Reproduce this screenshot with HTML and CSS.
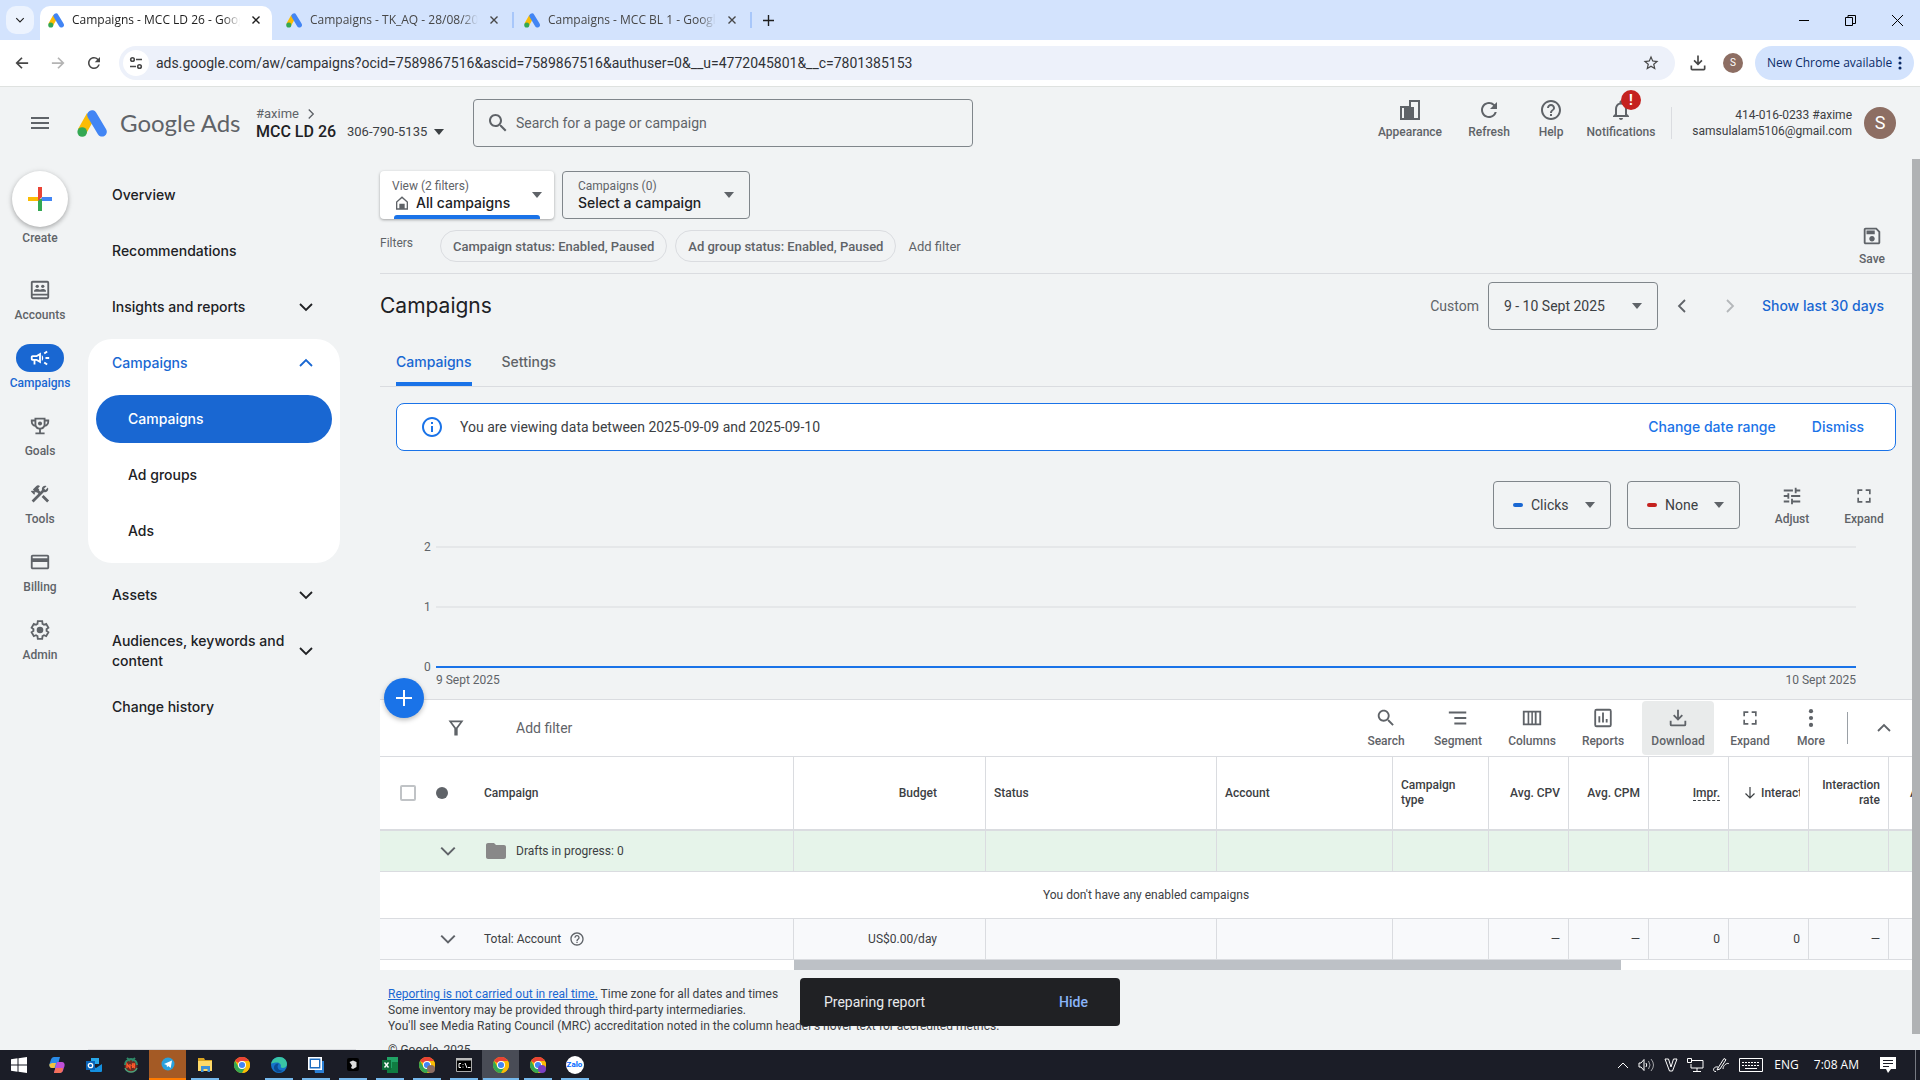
FILE: index.html
```html
<!DOCTYPE html>
<html lang="en">
<head>
<meta charset="utf-8">
<title>Campaigns - MCC LD 26 - Google Ads</title>
<link rel="stylesheet" href="styles.css">
</head>
<body>
<svg class="defs" aria-hidden="true">
  <symbol id="i-ads" viewBox="0 0 30 27"><path d="M14 5.500 5 21.500" stroke="#fbbc04" stroke-width="9.400"/><circle cx="5.200" cy="22" r="4.800" fill="#34a853"/><path d="M15 5 25 21.800" stroke="#4285f4" stroke-width="9.600" stroke-linecap="round"/></symbol>
  <symbol id="i-close" viewBox="0 0 16 16"><path d="m4 4 8 8M12 4l-8 8" fill="none" stroke="currentColor" stroke-width="1.600"/></symbol>
  <symbol id="i-search" viewBox="0 0 24 24"><path d="M15.500 14h-.79l-.28-.27C15.410 12.590 16 11.110 16 9.500 16 5.910 13.090 3 9.500 3S3 5.910 3 9.500 5.910 16 9.500 16c1.610 0 3.090-.59 4.230-1.570l.27.28v.79l5 4.990L20.490 19l-4.990-5zm-6 0C7.010 14 5 11.990 5 9.500S7.010 5 9.500 5 14 7.010 14 9.500 11.990 14 9.500 14z"/></symbol>
  <symbol id="i-menu" viewBox="0 0 24 24"><path d="M3 18h18v-2H3v2zm0-5h18v-2H3v2zm0-7v2h18V6H3z"/></symbol>
  <symbol id="i-refresh" viewBox="0 0 24 24"><path d="M17.650 6.350A7.958 7.958 0 0 0 12 4c-4.420 0-7.990 3.580-7.990 8s3.570 8 7.990 8c3.730 0 6.840-2.550 7.730-6h-2.080A5.990 5.990 0 0 1 12 18c-3.310 0-6-2.690-6-6s2.690-6 6-6c1.660 0 3.140.69 4.220 1.780L13 11h7V4l-2.350 2.350z"/></symbol>
  <symbol id="i-help" viewBox="0 0 24 24"><path d="M11 18h2v-2h-2v2zm1-16C6.480 2 2 6.480 2 12s4.480 10 10 10 10-4.480 10-10S17.520 2 12 2zm0 18c-4.410 0-8-3.590-8-8s3.590-8 8-8 8 3.590 8 8-3.590 8-8 8zm0-14c-2.210 0-4 1.790-4 4h2c0-1.100.9-2 2-2s2 .9 2 2c0 2-3 1.750-3 5h2c0-2.250 3-2.500 3-5 0-2.210-1.790-4-4-4z"/></symbol>
  <symbol id="i-bell" viewBox="0 0 24 24"><path d="M12 22c1.100 0 2-.9 2-2h-4c0 1.100.9 2 2 2zm6-6v-5c0-3.070-1.630-5.640-4.500-6.320V4c0-.83-.67-1.500-1.500-1.500s-1.500.67-1.500 1.500v.68C7.640 5.360 6 7.920 6 11v5l-2 2v1h16v-1l-2-2zm-2 1H8v-6c0-2.480 1.510-4.500 4-4.500s4 2.020 4 4.500v6z"/></symbol>
  <symbol id="i-appearance" viewBox="0 0 24 24"><path d="M2 8h9V2h11v20H2zm2 2v10h2V10zm9-6v5h3v11h4V4z" fill-rule="evenodd"/></symbol>
  <symbol id="i-info" viewBox="0 0 24 24"><path d="M11 7h2v2h-2zm0 4h2v6h-2zm1-9C6.480 2 2 6.480 2 12s4.480 10 10 10 10-4.480 10-10S17.520 2 12 2zm0 18c-4.410 0-8-3.590-8-8s3.590-8 8-8 8 3.590 8 8-3.590 8-8 8z"/></symbol>
  <symbol id="i-full" viewBox="0 0 24 24"><path d="M6 14H4v6h6v-2H6v-4zm-2-4h2V6h4V4H4v6zm14 8h-4v2h6v-6h-2v4zM14 4v2h4v4h2V4h-6z"/></symbol>
  <symbol id="i-tune" viewBox="0 0 24 24"><path d="M3 17v2h6v-2H3zM3 5v2h10V5H3zm10 16v-2h8v-2h-8v-2h-2v6h2zM7 9v2H3v2h4v2h2V9H7zm14 4v-2H11v2h10zm-6-4h2V7h4V5h-4V3h-2v6z"/></symbol>
  <symbol id="i-more" viewBox="0 0 24 24"><circle cx="12" cy="4.500" r="2.300"/><circle cx="12" cy="12" r="2.300"/><circle cx="12" cy="19.500" r="2.300"/></symbol>
  <symbol id="i-mega" viewBox="0 0 24 24"><path d="M18 11v2h4v-2h-4zm-2 6.610c.96.71 2.210 1.650 3.200 2.390.4-.53.8-1.070 1.200-1.600-.99-.74-2.240-1.680-3.200-2.400-.4.54-.8 1.080-1.200 1.610zM20.400 5.600c-.4-.53-.8-1.070-1.200-1.600-.99.74-2.240 1.680-3.200 2.400.4.530.8 1.070 1.200 1.600.96-.72 2.210-1.650 3.200-2.400zM4 9c-1.100 0-2 .9-2 2v2c0 1.100.9 2 2 2h1v4h2v-4h1l5 3V6L8 9H4zm7 .5v5L8.500 13H4v-2h4.500zM15.500 12c0-1.330-.58-2.530-1.500-3.350v6.690c.92-.81 1.500-2.010 1.500-3.340z"/></symbol>
  <symbol id="i-card" viewBox="0 0 24 24"><path d="M20 4H4c-1.110 0-1.990.89-1.990 2L2 18c0 1.110.89 2 2 2h16c1.110 0 2-.89 2-2V6c0-1.110-.89-2-2-2zm0 14H4v-6h16v6zm0-10H4V6h16v2z"/></symbol>
  <symbol id="i-gear" viewBox="0 0 24 24"><path fill="none" stroke="currentColor" stroke-width="2" d="M19.140 12.940c.04-.3.06-.61.06-.94 0-.32-.02-.64-.07-.94l2.030-1.580-2.390-4.150-2.390.96c-.5-.38-1.030-.7-1.620-.94L14.400 2.400H9.600l-.36 2.950c-.59.24-1.130.57-1.620.94l-2.390-.96-2.370 4.150 2.030 1.580c-.05.3-.09.63-.09.94s.02.64.07.94l-2.030 1.580 2.390 4.150 2.390-.96c.5.38 1.030.7 1.620.94l.36 2.950h4.800l.36-2.950c.59-.24 1.130-.56 1.620-.94l2.390.96 2.390-4.150z"/><circle cx="12" cy="12" r="3.600"/></symbol>
  <symbol id="i-tools" viewBox="0 0 24 24"><path d="m13.783 15.172 2.121-2.121 5.996 5.996-2.121 2.121zM17.500 10c1.930 0 3.500-1.570 3.500-3.500 0-.58-.16-1.120-.41-1.600l-2.700 2.700-1.490-1.490 2.700-2.700c-.48-.25-1.020-.41-1.600-.41C15.570 3 14 4.570 14 6.500c0 .41.08.8.21 1.160l-1.850 1.850-1.780-1.780.71-.71-1.410-1.410L12 3.490a3 3 0 0 0-4.240 0L4.220 7.030l1.410 1.410H2.810l-.71.71 3.540 3.540.71-.71V9.150l1.410 1.410.71-.71 1.780 1.780-7.410 7.410 2.120 2.120L16.340 9.790c.36.13.75.21 1.160.21z"/></symbol>
  <symbol id="i-trophy" viewBox="0 0 24 24"><path d="M22 5h-4V3H6v2H2v2c0 3.200 1.900 5.300 4.600 5.800.8 1.700 2.300 2.800 4.400 3.100V19H7v2h10v-2h-4v-3.100c2.100-.3 3.600-1.400 4.400-3.100C20.100 12.300 22 10.200 22 7zM4 7h2v3.600C4.800 10 4 8.800 4 7zm8 7c-2.200 0-4-1.500-4-3.600V5h8v5.400c0 2.100-1.800 3.600-4 3.600zm6-3.400V7h2c0 1.800-.8 3-2 3.600z"/><circle cx="12" cy="9.300" r="2.200"/></symbol>
  <symbol id="i-accounts" viewBox="0 0 24 24"><path d="M4 2h16a2 2 0 0 1 2 2v16a2 2 0 0 1-2 2H4a2 2 0 0 1-2-2V4c0-1.100.9-2 2-2zm0 2v12h16V4zm0 14v2h16v-2z" fill-rule="evenodd"/><circle cx="9" cy="8" r="1.800"/><circle cx="15" cy="8" r="1.800"/><path d="M5.500 14v-1c0-1.500 2-2.200 3.500-2.200 1.100 0 2.200.3 3 1 .8-.7 1.900-1 3-1 1.500 0 3.500.7 3.500 2.200v1z"/></symbol>
  <symbol id="i-save" viewBox="0 0 24 24"><path d="M17 3H5c-1.110 0-2 .9-2 2v14c0 1.100.89 2 2 2h14c1.100 0 2-.9 2-2V7l-4-4zm2 16H5V5h11.170L19 7.830V19zm-7-7c-1.660 0-3 1.340-3 3s1.340 3 3 3 3-1.340 3-3-1.340-3-3-3zM6 6h9v4H6z"/></symbol>
  <symbol id="i-reports" viewBox="0 0 24 24"><path d="M19 2H5a2.500 2.500 0 0 0-2.500 2.500v15A2.500 2.500 0 0 0 5 22h14a2.500 2.500 0 0 0 2.500-2.500v-15A2.500 2.500 0 0 0 19 2zm.5 18h-15V4h15v16zM7 10h2v7H7zm4-4h2v11h-2zm4 7h2v4h-2z"/></symbol>
  <symbol id="i-columns" viewBox="0 0 24 24"><path d="M2 4h20v16H2zm2 2v12h3.200V6zm5 0v12h2.300V6zm4 0v12h2V6zm4 0v12h3V6z" fill-rule="evenodd"/></symbol>
  <symbol id="i-down" viewBox="0 0 24 24"><path d="M11 3h2v8.200l3-3 1.400 1.400L12 15 6.600 9.600 8 8.200l3 3zM3 15h2v4h14v-4h2v4a2 2 0 0 1-2 2H5a2 2 0 0 1-2-2z"/></symbol>
  <symbol id="i-funnel" viewBox="0 0 24 24"><path d="M3 3h18l-7 9.500V21h-4v-8.500zm4 2 5 6.800L17 5z" fill-rule="evenodd"/></symbol>
  <symbol id="i-segment" viewBox="0 0 24 24"><path d="M8 19h13v-2H8zM2 5v2h19V5zm6 8h13v-2H8z"/></symbol>
  <symbol id="i-folder" viewBox="0 0 24 24"><path d="M10 4H4c-1.100 0-1.990.9-1.990 2L2 18c0 1.100.9 2 2 2h16c1.100 0 2-.9 2-2V8c0-1.100-.9-2-2-2h-8l-2-2z"/></symbol>
  <symbol id="i-star" viewBox="0 0 24 24"><path d="m22 9.240-7.190-.62L12 2 9.190 8.630 2 9.240l5.460 4.730L5.820 21 12 17.270 18.180 21l-1.630-7.030L22 9.240zM12 15.400l-3.760 2.270 1-4.280-3.320-2.880 4.380-.38L12 6.100l1.710 4.040 4.380.38-3.320 2.880 1 4.280L12 15.400z"/></symbol>
  <symbol id="i-home" viewBox="0 0 24 24"><path d="M12 2 3 10v12h18V10zm0 2.800 7 6.200v9h-3v-7H8v7H5v-9z" fill-rule="evenodd"/><path d="M10 14h4v7h-4z"/></symbol>
  <symbol id="i-chev" viewBox="0 0 16 16"><path d="m2 5 6 6 6-6" fill="none" stroke="currentColor" stroke-width="1.800"/></symbol>
  <symbol id="i-caret" viewBox="0 0 10 6"><path d="M0 0h10L5 6z"/></symbol>
  <symbol id="i-plus" viewBox="0 0 16 16"><path d="M8 0v16M0 8h16" stroke="currentColor" stroke-width="2"/></symbol>
  <symbol id="i-back" viewBox="0 0 16 16"><path d="M15 8H2M8 2 2 8l6 6" fill="none" stroke="currentColor" stroke-width="2"/></symbol>
  <symbol id="i-chrome" viewBox="0 0 24 24"><circle cx="12" cy="12" r="12" fill="#fbbc04"/><path d="M12 12 1.600 6A12 12 0 0 1 22.400 6z" fill="#ea4335"/><path d="M12 6h10.400A12 12 0 0 1 12 24l5.200-9z" fill="#fbbc04"/><path d="M1.600 6 6.800 15 12 18l0 6A12 12 0 0 1 1.600 6z" fill="#34a853"/><path d="m12 24 5.200-9L12 18z" fill="#34a853"/><circle cx="12" cy="12" r="6" fill="#fff"/><circle cx="12" cy="12" r="4.600" fill="#4285f4"/></symbol>
</svg>

<div class="tabstrip">
  <button class="tab-search" aria-label="Search tabs"><svg width="10" height="10"><use href="#i-chev"/></svg></button>
  <div class="tab tab-active"><svg class="fav"><use href="#i-ads"/></svg><span class="tab-title">Campaigns - MCC LD 26 - Google Ads</span><button aria-label="Close tab"><svg width="14" height="14"><use href="#i-close"/></svg></button></div>
  <div class="tab"><svg class="fav"><use href="#i-ads"/></svg><span class="tab-title">Campaigns - TK_AQ - 28/08/2025</span><button aria-label="Close tab"><svg width="14" height="14"><use href="#i-close"/></svg></button></div>
  <div class="tab tab-ruled"><svg class="fav"><use href="#i-ads"/></svg><span class="tab-title">Campaigns - MCC BL 1 - Google Ads</span><button aria-label="Close tab"><svg width="14" height="14"><use href="#i-close"/></svg></button></div>
  <button class="new-tab" aria-label="New tab"><svg width="11" height="11"><use href="#i-plus"/></svg></button>
  <div class="win">
    <button aria-label="Minimise"><svg width="10" height="10"><path d="M0 5.500h10" stroke="#000"/></svg></button>
    <button aria-label="Restore"><svg class="outline" width="11" height="11"><path d="M.5 2.500h7v8h-7zM3 2V.5h7.500v8H8" stroke="#000"/></svg></button>
    <button aria-label="Close"><svg width="11" height="11"><path d="m0 0 11 11M11 0 0 11" stroke="#000"/></svg></button>
  </div>
</div>

<div class="toolbar">
  <button class="tb" aria-label="Back"><svg width="14" height="14"><use href="#i-back"/></svg></button>
  <button class="tb tb-off" aria-label="Forward"><svg class="flip" width="14" height="14"><use href="#i-back"/></svg></button>
  <button class="tb" aria-label="Reload"><svg width="18" height="18"><use href="#i-refresh"/></svg></button>
  <div class="omni">
    <button class="site" aria-label="Site information"><svg class="outline" width="14" height="14" viewBox="0 0 14 14" stroke="currentColor" stroke-width="1.600"><circle cx="3.500" cy="3.500" r="1.800"/><path d="M7 3.500h6M1 10.500h6"/><circle cx="10.500" cy="10.500" r="1.800"/></svg></button>
    <input type="text" aria-label="Address" value="ads.google.com/aw/campaigns?ocid=7589867516&amp;ascid=7589867516&amp;authuser=0&amp;__u=4772045801&amp;__c=7801385153">
    <button aria-label="Bookmark"><svg width="18" height="18"><use href="#i-star"/></svg></button>
  </div>
  <button class="tb" aria-label="Downloads"><svg width="20" height="20"><use href="#i-down"/></svg></button>
  <button class="avatar avatar-s" aria-label="Profile">S</button>
  <button class="update">New Chrome available<svg width="16" height="16"><use href="#i-more"/></svg></button>
</div>

<header class="head">
  <button class="burger" aria-label="Main menu"><svg width="24" height="24"><use href="#i-menu"/></svg></button>
  <a class="brand" href="#"><svg width="30" height="27"><use href="#i-ads"/></svg><span>Google Ads</span></a>
  <div class="acct">
    <a class="acct-up" href="#">#axime <svg class="right" width="12" height="12"><use href="#i-chev"/></svg></a>
    <button class="acct-me"><b>MCC LD 26</b>306-790-5135<svg width="10" height="6"><use href="#i-caret"/></svg></button>
  </div>
  <label class="search"><svg width="24" height="24"><use href="#i-search"/></svg><input type="search" aria-label="Search" placeholder="Search for a page or campaign"></label>
  <div class="head-tools">
    <button class="w80"><svg width="24" height="24"><use href="#i-appearance"/></svg>Appearance</button>
    <button class="w78"><svg width="24" height="24"><use href="#i-refresh"/></svg>Refresh</button>
    <button class="w46"><svg width="24" height="24"><use href="#i-help"/></svg>Help</button>
    <button class="w94 notif"><svg width="24" height="24"><use href="#i-bell"/></svg>Notifications<span class="badge">!</span></button>
  </div>
  <div class="who"><span>414-016-0233 #axime</span><span>samsulalam5106@gmail.com</span></div>
  <button class="avatar avatar-l" aria-label="Account">S</button>
</header>

<div class="body">
  <nav class="rail" aria-label="Sections">
    <button class="create"><span><svg width="24" height="24" viewBox="0 0 24 24"><path d="M14 10h10v4H12z" fill="#4285f4"/><path d="M10 12h4v12h-4z" fill="#34a853"/><path d="M0 10h12l-2 4H0z" fill="#fbbc04"/><path d="M10 0h4v10l-4 4z" fill="#ea4335"/></svg></span>Create</button>
    <a href="#"><i><svg><use href="#i-accounts"/></svg></i>Accounts</a>
    <a href="#" class="on"><i><svg><use href="#i-mega"/></svg></i>Campaigns</a>
    <a href="#"><i><svg><use href="#i-trophy"/></svg></i>Goals</a>
    <a href="#"><i><svg><use href="#i-tools"/></svg></i>Tools</a>
    <a href="#"><i><svg><use href="#i-card"/></svg></i>Billing</a>
    <a href="#"><i><svg><use href="#i-gear"/></svg></i>Admin</a>
  </nav>

  <nav class="side" aria-label="Pages">
    <a href="#">Overview</a>
    <a href="#">Recommendations</a>
    <a href="#">Insights and reports<svg><use href="#i-chev"/></svg></a>
    <div class="group">
      <a href="#" class="open">Campaigns<svg class="up"><use href="#i-chev"/></svg></a>
      <a href="#" class="sub current">Campaigns</a>
      <a href="#" class="sub">Ad groups</a>
      <a href="#" class="sub">Ads</a>
    </div>
    <a href="#" class="after">Assets<svg><use href="#i-chev"/></svg></a>
    <a href="#">Audiences, keywords and content<svg><use href="#i-chev"/></svg></a>
    <a href="#">Change history</a>
  </nav>

  <main class="main">
    <section class="scope">
      <div class="pickers">
        <div class="picker picker-on"><div><label for="view">View (2 filters)</label><div class="line"><svg width="16" height="16"><use href="#i-home"/></svg><select id="view"><option>All campaigns</option></select></div></div><svg class="caret"><use href="#i-caret"/></svg></div>
        <div class="picker"><div><label for="camp">Campaigns (0)</label><select id="camp"><option>Select a campaign</option></select></div><svg class="caret"><use href="#i-caret"/></svg></div>
      </div>
      <div class="filters">
        <span class="filters-label">Filters</span>
        <button class="chip">Campaign status: Enabled, Paused</button>
        <button class="chip">Ad group status: Enabled, Paused</button>
        <button class="add">Add filter</button>
        <button class="tool save"><svg><use href="#i-save"/></svg>Save</button>
      </div>
    </section>

    <div class="title">
      <h1>Campaigns</h1>
      <label for="range">Custom</label>
      <div class="box box-date"><select id="range"><option>9 - 10 Sept 2025</option></select><svg class="caret"><use href="#i-caret"/></svg></div>
      <button class="step" aria-label="Previous period"><svg class="left"><use href="#i-chev"/></svg></button>
      <button class="step step-off" aria-label="Next period"><svg class="right"><use href="#i-chev"/></svg></button>
      <a class="action last30" href="#">Show last 30 days</a>
    </div>

    <div class="tabs"><a href="#" class="sel">Campaigns</a><a href="#">Settings</a></div>

    <div class="notice"><svg width="24" height="24"><use href="#i-info"/></svg><p>You are viewing data between 2025-09-09 and 2025-09-10</p><a class="action" href="#">Change date range</a><a class="action" href="#">Dismiss</a></div>

    <div class="chart-tools">
      <div class="box box-clicks"><i class="key blue"></i><select aria-label="First metric"><option>Clicks</option></select><svg class="caret"><use href="#i-caret"/></svg></div>
      <div class="box box-none"><i class="key red"></i><select aria-label="Second metric"><option>None</option></select><svg class="caret"><use href="#i-caret"/></svg></div>
      <button class="tool"><svg><use href="#i-tune"/></svg>Adjust</button>
      <button class="tool"><svg class="s20"><use href="#i-full"/></svg>Expand</button>
    </div>

    <div class="chart">
      <div class="grid-row"><span>2</span><hr></div>
      <div class="grid-row"><span>1</span><hr></div>
      <div class="grid-row base"><span>0</span><hr></div>
      <div class="dates"><span>9 Sept 2025</span><span>10 Sept 2025</span></div>
    </div>

    <section class="panel">
      <button class="fab" aria-label="New campaign"><svg width="16" height="16"><use href="#i-plus"/></svg></button>
      <div class="bar">
        <svg class="funnel" width="20" height="20"><use href="#i-funnel"/></svg>
        <button class="bar-add">Add filter</button>
        <button class="tool w72"><svg><use href="#i-search"/></svg>Search</button>
        <button class="tool w72"><svg><use href="#i-segment"/></svg>Segment</button>
        <button class="tool w76"><svg><use href="#i-columns"/></svg>Columns</button>
        <button class="tool w66"><svg><use href="#i-reports"/></svg>Reports</button>
        <button class="tool w72 hot"><svg><use href="#i-down"/></svg>Download</button>
        <button class="tool w72"><svg class="s20"><use href="#i-full"/></svg>Expand</button>
        <button class="tool w50"><svg><use href="#i-more"/></svg>More</button>
        <span class="sep"></span>
        <button class="fold" aria-label="Collapse"><svg class="up" width="16" height="16"><use href="#i-chev"/></svg></button>
      </div>
      <table>
        <colgroup><col class="c1"><col class="c2"><col class="c3"><col class="c4"><col class="c5"><col class="c6"><col class="c6"><col class="c6"><col class="c6"><col class="c6"><col></colgroup>
        <thead>
          <tr>
            <th><div class="name"><input type="checkbox" aria-label="Select all"><span class="dot"></span>Campaign</div></th>
            <th class="num pad40">Budget</th><th>Status</th><th>Account</th><th>Campaign type</th>
            <th class="num">Avg. CPV</th><th class="num">Avg. CPM</th><th class="num"><span class="hint">Impr.</span></th>
            <th><div class="sorted"><svg class="outline" width="12" height="12" viewBox="0 0 12 12"><path d="M6 0v11M1.500 6.500 6 11l4.500-4.500" stroke="currentColor" stroke-width="1.200"/></svg><span>Interactions</span></div></th>
            <th class="num">Interaction rate</th><th class="cut">Avg. cost</th>
          </tr>
        </thead>
        <tbody>
          <tr class="drafts">
            <td><div class="name"><svg class="open-row"><use href="#i-chev"/></svg><svg class="folder"><use href="#i-folder"/></svg>Drafts in progress: 0</div></td>
            <td></td><td></td><td></td><td></td><td></td><td></td><td></td><td></td><td></td><td></td>
          </tr>
          <tr class="empty"><td colspan="11">You don't have any enabled campaigns</td></tr>
          <tr class="total">
            <td><div class="name"><svg class="open-row"><use href="#i-chev"/></svg>Total: Account<svg class="q"><use href="#i-help"/></svg></div></td>
            <td class="num pad40">US$0.00/day</td><td></td><td></td><td></td>
            <td class="num">—</td><td class="num">—</td><td class="num">0</td><td class="num">0</td><td class="num">—</td><td></td>
          </tr>
        </tbody>
      </table>
      <div class="hscroll"><span></span></div>
    </section>

    <footer class="foot">
      <p><a href="#">Reporting is not carried out in real time.</a> Time zone for all dates and times</p>
      <p>Some inventory may be provided through third-party intermediaries.</p>
      <p>You'll see Media Rating Council (MRC) accreditation noted in the column header's hover text for accredited metrics.</p>
      <p class="copy">© Google, 2025.</p>
    </footer>
  </main>
  <div class="vscroll"><span></span></div>
</div>

<div class="toast" role="status"><span>Preparing report</span><button>Hide</button></div>

<div class="taskbar">
  <button class="start" aria-label="Start"><svg viewBox="0 0 16 16"><path d="M0 2.300 6.500 1.300v6.200H0zM7.500 1.200 16 0v7.500H7.500zM0 8.500h6.500v6.200L0 13.700zM7.500 8.500H16V16l-8.500-1.200z" fill="#fff"/></svg></button>
  <button aria-label="Copilot"><svg viewBox="0 0 16 16"><path d="M5 0h6l-3 11H3C1 11 0 9 .5 7L2 2.500C2.500 1 3.500 0 5 0z" fill="#2a8be8"/><path d="M3 6h4l-1.500 5H3C1 11 0 9 .5 7z" fill="#f2c23e"/><path d="M10 16H5l3-11h5c2 0 3 2 2.500 4L14 13.500c-.5 1.500-2 2.500-4 2.500z" fill="#c04fd8"/><path d="M10 16H5l1.400-5H14l-.6 3.500c-.7 1-2 1.500-3.400 1.500z" fill="#f4705a"/></svg></button>
  <button aria-label="Outlook"><svg viewBox="0 0 16 16"><path d="M5 1h8v6H5z" fill="#28a8ea"/><path d="M4 7l6 4 6-4v7a1 1 0 0 1-1 1H5a1 1 0 0 1-1-1z" fill="#1490df"/><path d="M0 4h9v9H0z" fill="#0a64b8"/><circle cx="4.500" cy="8.500" r="2.200" fill="none" stroke="#fff" stroke-width="1.300"/></svg></button>
  <button aria-label="NR"><svg viewBox="0 0 16 16"><circle cx="8" cy="9" r="6.500" fill="#6e2a22"/><path d="M2 8a6 6 0 0 1 12 0M4 1l3 3M12 1 9 4" fill="none" stroke="#2f8a6a" stroke-width="2"/><path d="M2 11a6.500 6.500 0 0 0 12 0" fill="none" stroke="#4aa27b" stroke-width="1.500"/><path d="M4 11V7l3 4V7M9.500 11V7h2v2h-2l2.500 2" fill="none" stroke="#ff5a2a" stroke-width="1.300"/></svg></button>
  <button class="alert" aria-label="Telegram"><svg viewBox="0 0 16 16"><circle cx="8" cy="8" r="6.500" fill="#2aa1dc"/><path d="m4 8 8-3.500-1.300 7.500-2.500-2-1.200 1.300-.4-2.300z" fill="#fff"/></svg></button>
  <button class="run" aria-label="Explorer"><svg viewBox="0 0 16 16"><path d="M1 1h6l1 2h7v4H1z" fill="#d9a320"/><path d="M1 4h14v10H1z" fill="#ffd968"/><path d="M4 15V9h9v6h-2.500v-3h-4v3z" fill="#3f92d8"/></svg></button>
  <button aria-label="Chrome"><svg><use href="#i-chrome"/></svg></button>
  <button class="run" aria-label="Edge"><svg viewBox="0 0 16 16"><circle cx="8" cy="8" r="8" fill="#1573c9"/><path d="M0 7C1 2.500 4.500 0 8.500 0 13 0 16 3.500 16 7c0 2.500-2 4-4.200 4-1.500 0-2.300-.5-2-1.200C10.500 8 9 5.500 6 5.500 3.500 5.500 1 6 0 7z" fill="#39c5a4"/><path d="M7 8c-1.500 3 1 6 5 5.500-3 3-8 2-9-2C2.500 8.500 5 6 7.500 6.500 8 7 7.200 7.500 7 8z" fill="#0b4b94"/></svg></button>
  <button class="run" aria-label="Remote"><svg viewBox="0 0 16 16"><path d="M5 4h11v12H7z" fill="#2b7fd4"/><path d="M.8.8h12.400v11.400H.8z" fill="#1c6cc0" stroke="#fff" stroke-width="1.600"/><path d="M3 3h8v7H3z" fill="#fff"/></svg></button>
  <button class="run" aria-label="Cursor"><svg viewBox="0 0 16 16"><rect x="2" y="1" width="12" height="13" rx="2" fill="#000"/><path d="m4.500 5 3.500-1.500L11.500 5v5L8 12l-2-1 1-2.500z" fill="#ddd"/></svg></button>
  <button class="run" aria-label="Excel"><svg viewBox="0 0 16 16"><path d="M5 0h11v16H5z" fill="#21a366"/><path d="M10 5h6v6h-6zM5 11h11v5H5z" fill="#107c41"/><path d="M0 3h9v10H0z" fill="#0e6b38"/><path d="m2.500 5.500 4 5M6.500 5.500l-4 5" stroke="#fff" stroke-width="1.400"/></svg></button>
  <button class="run" aria-label="Chrome profile S"><svg viewBox="0 0 24 24"><use href="#i-chrome" width="24" height="24"/><circle cx="18" cy="18" r="6" fill="#8d6e63"/></svg></button>
  <button class="run" aria-label="Command prompt"><svg viewBox="0 0 16 16"><path d="M.5 1.500h15v13H.5z" fill="#000" stroke="#aaa"/><path d="M0 1h16v2.500H0z" fill="#bbb"/><path d="M5 6.500H3v4h2M7 7v.8M7 9.700v.8M9 6l2 5M12 10.500h2.500" fill="none" stroke="#fff"/></svg></button>
  <button class="run live" aria-label="Chrome window"><svg><use href="#i-chrome"/></svg></button>
  <button class="run" aria-label="Chrome profile W"><svg viewBox="0 0 24 24"><use href="#i-chrome" width="24" height="24"/><circle cx="18" cy="18" r="6" fill="#7b3fc4"/></svg></button>
  <button class="run zalo" aria-label="Zalo"><span>Zalo</span></button>
  <div class="tray">
    <svg width="12" height="7" viewBox="0 0 12 7"><path d="m1 6 5-5 5 5"/></svg>
    <svg width="17" height="14" viewBox="0 0 17 14"><path d="M1 5h2l3-3.500v11L3 9H1zM8 5q1.500 2 0 4"/><path d="M10.500 3q3 4 0 8M13 1q5 6 0 12" opacity=".6"/></svg>
    <svg width="14" height="14" viewBox="0 0 14 14"><path d="M1 1h3.500L7 9l2.500-8H13L8.500 13h-3z"/></svg>
    <svg width="17" height="14" viewBox="0 0 17 14"><path d="M5 2.500h11v7.500H4V6M.5.500h4v4h-4zM10 10v3M6 13.500h8"/></svg>
    <svg width="17" height="16" viewBox="0 0 17 16"><path d="M5 11 11 1.500l2 1.200L7 12l-3 1zM5 10c-5-1-6 5-2 4.500M10 12c0-4 5-7 6-5"/></svg>
    <svg width="24" height="14" viewBox="0 0 24 14"><path d="M.5.500h23v13H.5z"/><path d="M3 4.500h18M3 7.500h18" stroke-dasharray="2 1"/><path d="M6 10.500h12"/></svg>
    <span class="lang">ENG</span>
    <span class="time">7:08 AM</span>
    <svg width="16" height="16" viewBox="0 0 16 16"><path d="M0 0h16v12h-5l-3 4-2-4H0z" fill="#fff" stroke="none"/><path d="M3 3.500h10M3 6.500h10M3 9.500h6" stroke="#1c1e28"/></svg>
    <span class="edge"></span>
  </div>
</div>
</body>
</html>
```
FILE: styles.css
```css
* { box-sizing: border-box; }
html, body { margin: 0; height: 100%; }
body {
  display: flex;
  flex-direction: column;
  overflow: hidden;
  background: #f1f3f4;
  color: #3c4043;
  font: 400 12px/16px Roboto, sans-serif;
}
button, input, select { font: inherit; color: inherit; background: none; border: 0; padding: 0; margin: 0; }
select { appearance: none; outline: 0; }
input { outline: 0; min-width: 0; }
a { color: inherit; text-decoration: none; }
p, h1 { margin: 0; }
svg { display: block; flex: none; fill: currentColor; }
.outline { fill: none; }
.defs { position: absolute; width: 0; height: 0; }
.up { transform: rotate(180deg); }
.left { transform: rotate(90deg); }
.right { transform: rotate(-90deg); }
.flip { transform: rotate(180deg); }

/* browser window */
.tabstrip { flex: none; display: flex; align-items: flex-end; height: 40px; padding-left: 6px; background: #d3e3fd; color: #1f1f1f; font-family: "Open Sans", sans-serif; }
.tab-search { display: grid; place-items: center; width: 28px; height: 28px; margin: 0 6px 6px 0; border-radius: 10px; background: #ecf3fe; }
.tab { display: flex; align-items: center; width: 238px; height: 34px; padding: 0 9px 6px 14px; color: #474747; }
.tab-active { width: 232px; padding: 0 9px 6px 8px; background: #fff; border-radius: 10px 10px 0 0; color: #1f1f1f; }
.tab-ruled { background: linear-gradient(#a8c7fa, #a8c7fa) 2px 6px / 2px 16px no-repeat; }
.fav { width: 16px; height: 15px; margin-right: 8px; }
.tab-title { flex: 1; overflow: hidden; white-space: nowrap; mask-image: linear-gradient(90deg, #000 90%, transparent); }
.tab button { margin-left: 9px; }
.new-tab { height: 16px; margin: 0 0 12px 2px; padding-left: 11px; border-left: 2px solid #a8c7fa; display: grid; align-items: center; }
.win { display: flex; align-items: center; gap: 36px; height: 40px; margin-left: auto; padding-right: 17px; }
.toolbar { flex: none; display: flex; align-items: center; height: 47px; padding: 0 6px 0 11px; background: #fff; border-bottom: 1px solid #dfe2e0; color: #474747; font-family: "Open Sans", sans-serif; }
.tb { display: grid; place-items: center; width: 22px; margin-right: 14px; }
.tb-off { color: #b4b4b4; }
.omni { flex: 1; display: flex; align-items: center; height: 34px; margin-right: 12px; padding: 0 15px 0 4px; border-radius: 17px; background: #edf1fa; }
.omni input { flex: 1; font: 400 14px/20px Roboto, sans-serif; color: #303236; }
.site { display: grid; place-items: center; width: 26px; height: 26px; margin-right: 7px; border-radius: 13px; background: #fff; }
.avatar { display: grid; place-items: center; flex: none; border-radius: 50%; background: #8d6e63; color: #fff; font-family: Roboto, sans-serif; }
.avatar-s { width: 20px; height: 20px; margin-right: 12px; font-size: 10px; }
.avatar-l { width: 32px; height: 32px; font-size: 18px; }
.toolbar .update { display: flex; align-items: center; justify-content: space-between; width: 159px; height: 34px; padding: 0 6px 0 12px; border-radius: 17px; background: #d3e3fd; color: #0a2a66; white-space: nowrap; }

/* app header */
.head { flex: none; display: flex; align-items: center; height: 72px; padding: 0 24px 0 28px; color: #5f6368; }
.brand { display: flex; align-items: center; gap: 13px; width: 179px; margin-left: 25px; white-space: nowrap; font: 400 24px/28px Lato, sans-serif; }
.acct { width: 217px; color: #3c4043; font-size: 13px; line-height: 18px; }
.acct-up { display: flex; align-items: center; gap: 6px; color: #5f6368; }
.acct-me { display: flex; align-items: center; gap: 7px; white-space: nowrap; }
.acct-me b { width: 84px; font: 500 16px/18px Roboto, sans-serif; color: #202124; text-align: left; }
.search { display: flex; align-items: center; gap: 6px; width: 500px; height: 48px; padding-left: 12px; border: 1px solid #80868b; border-radius: 4px; }
.search input { flex: 1; font-size: 14px; }
.search input::placeholder { color: #5f6368; opacity: 1; }
.head-tools { display: flex; margin-left: auto; font-weight: 500; }
.head-tools button { display: flex; flex-direction: column; align-items: center; gap: 2px; padding-bottom: 8px; }
.w80 { width: 80px; }
.w78 { width: 78px; }
.w46 { width: 46px; }
.w94 { width: 94px; }
.notif { position: relative; }
.badge { position: absolute; top: -8px; left: 47px; width: 20px; height: 20px; border-radius: 10px; background: #c5221f; color: #fff; font: 700 14px/20px Roboto, sans-serif; }
.who { display: flex; flex-direction: column; align-items: flex-end; width: 181px; height: 32px; margin: 0 12px 0 3px; border-left: 1px solid #dadce0; color: #3c4043; }

/* body frame */
.body { flex: 1; display: flex; min-height: 0; overflow: hidden; }
.rail { flex: none; display: flex; flex-direction: column; align-items: center; width: 80px; padding-top: 12px; color: #5f6368; font-weight: 500; }
.create { display: flex; flex-direction: column; align-items: center; gap: 3px; margin-bottom: 30px; }
.create span { display: grid; place-items: center; width: 56px; height: 56px; border-radius: 28px; background: #fff; box-shadow: 0 2px 4px #0003, 0 1px 6px #0002; }
.rail a { display: flex; flex-direction: column; align-items: center; gap: 3px; height: 68px; }
.rail i { display: grid; place-items: center; width: 48px; height: 28px; border-radius: 14px; }
.rail i svg { width: 22px; height: 22px; }
.rail .on { color: #1967d2; }
.rail .on i { background: #1967d2; color: #fff; }
.side { flex: none; width: 268px; margin: 8px 24px 0 8px; padding-right: 16px; border-bottom: 1px solid #dadce0; color: #202124; font: 500 14px/20px Inter, sans-serif; }
.side a { display: flex; align-items: center; justify-content: space-between; height: 56px; padding: 0 26px 0 24px; }
.side svg { width: 16px; height: 16px; }
.group { height: 224px; border-radius: 24px; background: #fff; margin-top: 4px; padding-bottom: 8px; overflow: hidden; }
.group .open { height: 48px; color: #1967d2; }
.side .sub { padding-left: 32px; margin: 0 8px; }
.group .current { height: 48px; margin: 8px 8px 4px; border-radius: 24px; background: #1967d2; color: #fff; }
.after { margin-top: 4px; }

/* main column */
.main { flex: 1; min-width: 0; padding-top: 12px; }
.scope { height: 103px; border-bottom: 1px solid #dadce0; }
.pickers { display: flex; gap: 8px; }
.picker { display: flex; align-items: center; justify-content: space-between; width: 188px; height: 48px; padding: 0 15px; border: 1px solid #80868b; border-radius: 4px; color: #5f6368; }
.picker label { display: block; }
.picker select { display: block; font: 500 14px/18px Inter, sans-serif; color: #202124; }
.picker .line { display: flex; align-items: center; gap: 6px; padding-left: 2px; }
.picker-on { position: relative; width: 174px; padding: 0 12px; border: 0; background: #fff; box-shadow: 0 1px 3px #0005; }
.picker-on::after { content: ""; position: absolute; left: 14px; right: 14px; bottom: 0; height: 4px; border-radius: 3px 3px 0 0; background: #1a73e8; }
.caret { width: 10px; height: 6px; color: #5f6368; pointer-events: none; }
.filters { display: flex; align-items: flex-start; padding: 11px 24px 0 0; color: #5f6368; }
.filters-label { width: 60px; padding-top: 5px; }
.chip { height: 32px; margin-right: 8px; padding: 1px 12px 0; border: 1px solid #dadce0; border-radius: 16px; font-weight: 500; font-size: 13px; }
.add { height: 32px; padding: 1px 0 0 4px; font-size: 13px; }
.tool { display: flex; flex-direction: column; align-items: center; gap: 4px; color: #5f6368; font-weight: 500; }
.tool svg { width: 22px; height: 22px; }
.tool .s20 { width: 20px; height: 20px; margin: 1px; }
.save { margin: -5px 3px 0 auto; }
.title { display: flex; align-items: center; height: 64px; font-size: 14px; color: #5f6368; }
.title h1 { flex: 1; color: #202124; font: 400 21px/28px Inter, sans-serif; }
.box { display: flex; align-items: center; height: 48px; border: 1px solid #80868b; border-radius: 4px; color: #3c4043; font-size: 14px; }
.box select { flex: 1; }
.box-date { width: 170px; margin: 0 16px 0 9px; padding: 0 15px; }
.step { display: grid; place-items: center; width: 16px; margin-right: 32px; }
.step svg { width: 16px; height: 16px; }
.step-off { color: #b4b7ba; margin-right: 24px; }
.action { font: 500 14px/20px Inter, sans-serif; color: #1a73e8; }
.last30 { margin-right: 28px; color: #1967d2; }
.tabs { display: flex; gap: 30px; height: 49px; padding-left: 16px; border-bottom: 1px solid #dadce0; color: #5f6368; font: 500 14px/48px Inter, sans-serif; }
.tabs .sel { color: #1967d2; border-bottom: 4px solid #1a73e8; height: 48px; }
.notice { display: flex; align-items: center; height: 48px; margin: 16px 16px 30px; padding: 0 31px 0 23px; border: 1px solid #1a73e8; border-radius: 8px; background: #fff; gap: 16px; }
.notice svg { color: #1a73e8; }
.notice p { flex: 1; font-size: 14px; }
.notice .action + .action { margin-left: 20px; }
.chart-tools { display: flex; height: 48px; padding-right: 26px; }
.box-clicks { width: 118px; margin: 0 16px 0 auto; padding: 0 15px 0 19px; }
.box-none { width: 113px; margin-right: 16px; padding: 0 15px 0 19px; }
.key { width: 10px; height: 4px; margin-right: 8px; border-radius: 2px; }
.blue { background: #1967d2; }
.red { background: #c5221f; }
.chart-tools .tool { width: 72px; padding-top: 4px; }
.chart-tools .tool:last-child { margin-right: -14px; }
.chart { padding: 12px 56px 12px 40px; color: #5f6368; }
.grid-row { display: flex; height: 60px; line-height: 12px; }
.grid-row span { width: 16px; padding-left: 4px; }
.grid-row hr { flex: 1; height: 2px; margin: 5px 0 0; border: 0; background: #e5e7e9; }
.base { height: 12px; }
.base hr { background: #1a73e8; }
.dates { display: flex; justify-content: space-between; padding-left: 16px; line-height: 14px; }

/* campaign table */
.panel { position: relative; background: #fff; border-top: 1px solid #dadce0; }
.fab { position: absolute; left: 4px; top: -22px; display: grid; place-items: center; width: 40px; height: 40px; border-radius: 20px; background: #1a73e8; color: #fff; box-shadow: 0 2px 5px #0004; }
.bar { display: flex; align-items: center; height: 57px; padding: 0 20px 0 66px; border-bottom: 1px solid #dadce0; color: #5f6368; }
.bar-add { margin: 0 auto 0 50px; font-size: 14px; }
.bar .tool { height: 54px; padding-top: 6px; border-radius: 4px; }
.w72 { width: 72px; }
.w76 { width: 76px; }
.w66 { width: 66px; }
.w50 { width: 50px; }
.bar .w66 { margin-right: 6px; }
.bar .hot { background: #e9ebeb; }
.sep { width: 1px; height: 32px; margin: 0 28px 0 11px; background: #9aa0a6; }
table { width: 100%; table-layout: fixed; border-collapse: separate; border-spacing: 0; }
.c1 { width: 413px; }
.c2 { width: 192px; }
.c3 { width: 231px; }
.c4 { width: 176px; }
.c5 { width: 96px; }
.c6 { width: 80px; }
th, td { padding: 0 8px; border-bottom: 1px solid #dadce0; border-left: 1px solid #dadce0; text-align: left; font-weight: 400; overflow: hidden; }
th { height: 74px; border-bottom-width: 2px; font-weight: 500; line-height: 15px; }
th:first-child, td:first-child { border-left: 0; padding-left: 0; }
.num { text-align: right; }
.pad40 { padding-right: 48px; }
.name { display: flex; align-items: center; }
.name input { appearance: none; width: 16px; height: 16px; margin: 0 20px; border: 2px solid #c0c3c6; border-radius: 2px; }
.dot { width: 12px; height: 12px; margin-right: 36px; border-radius: 6px; background: #5f6368; }
.hint { border-bottom: 1px dashed #3c4043; }
.sorted { display: flex; align-items: center; gap: 5px; padding-left: 7px; overflow: hidden; }
.cut { padding: 0 0 0 21px; white-space: nowrap; }
.drafts td { height: 41px; background: #e6f4ea; }
.empty td:first-child { height: 47px; padding: 0; text-align: center; }
.total td { height: 41px; background: #f8f9fb; }
.open-row { width: 18px; height: 18px; margin: 0 27px 0 59px; color: #5f6368; }
.folder { width: 24px; height: 24px; margin-right: 8px; color: #888; }
.q { width: 16px; height: 16px; margin-left: 8px; color: #5f6368; }
.hscroll { height: 10px; padding: 0 291px 0 414px; }
.hscroll span { display: block; height: 10px; background: #bdc1c6; }
.foot { padding: 16px 8px 0; }
.foot a { color: #1967d2; text-decoration: underline; }
.copy { padding-top: 8px; }
.vscroll { flex: none; width: 8px; padding-bottom: 16px; }
.vscroll span { display: block; height: 100%; background: #b0b2b4; }
.toast { position: fixed; left: 50%; bottom: 54px; display: flex; align-items: center; justify-content: space-between; width: 320px; height: 48px; margin-left: -160px; padding: 0 32px 0 24px; border-radius: 4px; background: #202124; color: #e8eaed; font-size: 14px; }
.toast button { color: #8ab4f8; font-weight: 500; }

/* taskbar */
.taskbar { flex: none; display: flex; height: 30px; background: #1b1d27; color: #fff; }
.taskbar button { display: grid; place-items: center; width: 37px; height: 30px; }
.taskbar .start { width: 38px; }
.taskbar button svg { width: 16px; height: 16px; }
.run { background: linear-gradient(#76b9ed, #76b9ed) center bottom / 28px 2px no-repeat; }
.taskbar .live { background: linear-gradient(#76b9ed, #76b9ed) center bottom / 36px 2px no-repeat #494c56; }
.taskbar .alert { background: #a45a25; border-bottom: 2px solid #ff7b00; }
.zalo span { width: 18px; height: 18px; border-radius: 9px; background: #fff; color: #0068ff; font: 700 8px/18px Roboto, sans-serif; }
.tray { display: flex; align-items: center; margin-left: auto; padding-right: 4px; gap: 9px; font: 400 12px/16px "Open Sans", sans-serif; white-space: nowrap; }
.tray svg { fill: none; stroke: #fff; }
.lang { margin: 0 6px 0 2px; }
.time { margin-right: 12px; }
.edge { width: 1px; height: 30px; margin-left: 10px; background: #777a82; }
```
